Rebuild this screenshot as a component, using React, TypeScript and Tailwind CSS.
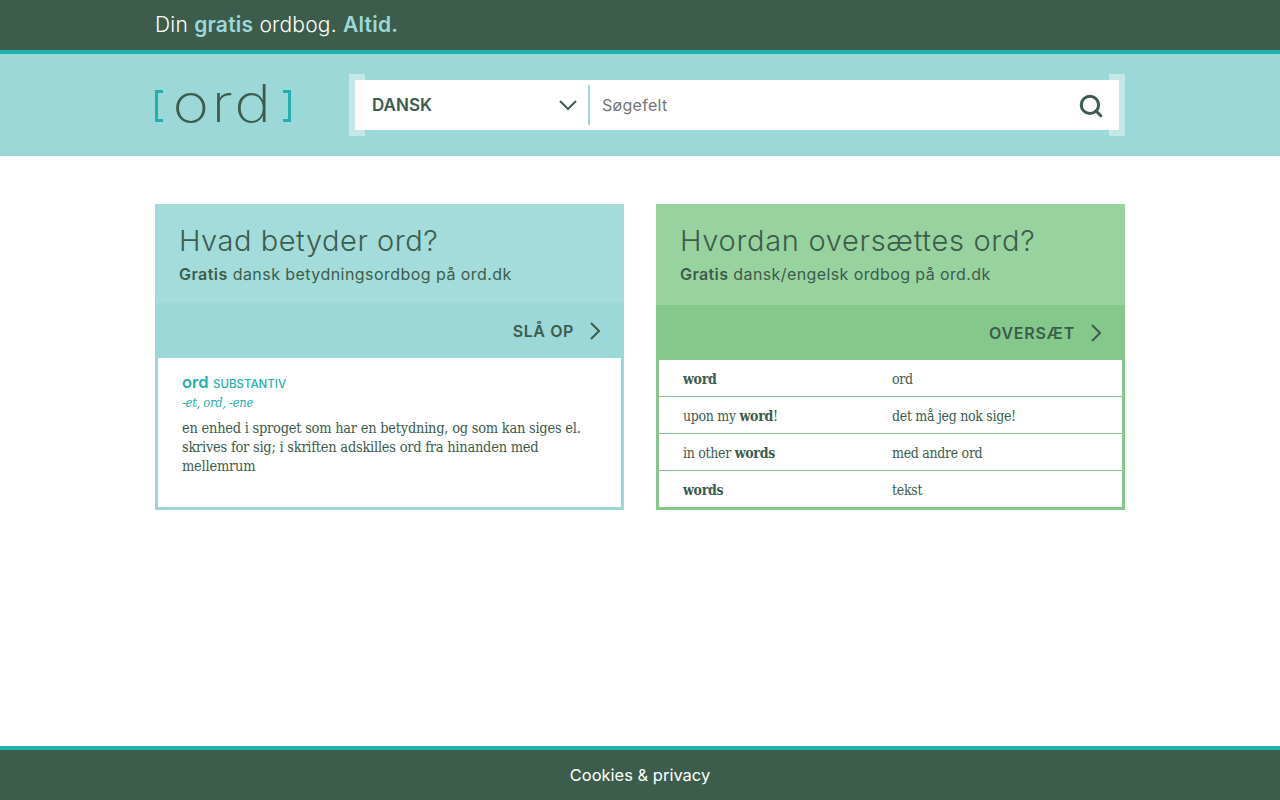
import { Search } from 'lucide-react';

const sans = 'font-["Inter",sans-serif]';
const serif = "font-['DejaVu_Serif_Condensed','DejaVu_Serif',serif]";

const rows = [
  { en: <b>word</b>, da: 'ord' },
  { en: <>upon my <b>word</b>!</>, da: 'det må jeg nok sige!' },
  { en: <>in other <b>words</b></>, da: 'med andre ord' },
  { en: <b>words</b>, da: 'tekst' },
];

const Arrow = () => (
  <svg width="10" height="18" viewBox="0 0 10 18" fill="none" stroke="#3c5c4c" strokeWidth="2">
    <path d="M1 1 L9 9 L1 17" />
  </svg>
);

export default function App() {
  return (
    <div className={`${sans} min-h-[800px] flex flex-col bg-white text-[#3c5c4c]`}>
      <div className="h-[54px] bg-[#3c5c4c] border-b-4 border-[#1eb1ad]">
        <div className="w-[970px] mx-auto h-[50px] flex items-center text-[21px] tracking-[0.22px] text-white font-light">
          <span>
            Din <b className="font-semibold text-[#9bd8d7]">gratis</b> ordbog. <b className="font-semibold text-[#9bd8d7]">Altid.</b>
          </span>
        </div>
      </div>

      <div className="h-[102px] bg-[#9bd8d7]">
        <div className="w-[970px] mx-auto h-full flex items-center justify-between">
          <div className="w-[136px] flex items-center justify-between">
            <div className="w-[8px] h-[32px] border-[3px] border-r-0 border-[#1eb1ad] mt-[2px]"></div>
            <div className="text-[52px] leading-[52px] font-extralight tracking-[2px] scale-x-[1.2] -mt-[3px]">ord</div>
            <div className="w-[8px] h-[32px] border-[3px] border-l-0 border-[#1eb1ad] mt-[2px]"></div>
          </div>

          <div className="relative w-[776px] h-[62px] p-[6px]">
            <div className="absolute left-0 top-0 w-4 h-full border-[6px] border-r-0 border-[#c3e8e7]"></div>
            <div className="absolute right-0 top-0 w-4 h-full border-[6px] border-l-0 border-[#c3e8e7]"></div>
            <div className="relative h-full bg-white flex items-center">
              <div className="w-[235px] h-10 border-r-2 border-[#9bd8d7] flex items-center justify-between pl-[17px] pr-[11px]">
                <span className="text-[17px] font-semibold pt-[1px]">DANSK</span>
                <svg width="18" height="11" viewBox="0 0 18 11" fill="none" stroke="#3c5c4c" strokeWidth="2">
                  <path d="M1 1 L9 9 L17 1" />
                </svg>
              </div>
              <div className="flex-1 pl-3 text-[16px] tracking-[0.3px] text-[#757575]">Søgefelt</div>
              <Search size={26} strokeWidth={2.8} className="mr-[15px] mt-[1px]" />
            </div>
          </div>
        </div>
      </div>

      <div className="w-[970px] mx-auto mt-12 grid grid-cols-2 gap-8">
        <div className="flex flex-col h-[306px]">
          <div className="h-[99px] bg-[#a3dcda] px-6 pt-[18px]">
            <h2 className="text-[29px] leading-[38px] font-light tracking-[0.55px]">Hvad betyder ord?</h2>
            <p className="text-[16px] leading-6 mt-[2px] tracking-[0.45px]"><b className="font-semibold">Gratis</b> dansk betydningsordbog på ord.dk</p>
          </div>
          <div className="h-[55px] bg-[#9bd8d7] flex items-center justify-end gap-4 pr-6">
            <span className="text-[16px] font-semibold tracking-[0.6px] pt-[1px]">SLÅ OP</span>
            <Arrow />
          </div>
          <div className="flex-1 bg-white border-[3px] border-t-0 border-[#9bd8d7] px-6 pt-[13px]">
            <div className="leading-[22px] text-[#1eb1ad]">
              <b className="text-[16.5px] font-semibold">ord</b> <span className="text-[11.5px] font-medium">SUBSTANTIV</span>
            </div>
            <div className={`${serif} italic text-[13px] leading-[19px] -mt-[2px] tracking-[-0.35px] text-[#1eb1ad]`}>-et, ord, -ene</div>
            <p className={`${serif} text-[14.5px] leading-[19px] mt-[7px] tracking-[-0.25px] text-[#3c5c4c]`}>
              en enhed i sproget som har en betydning, og som kan siges el. skrives for sig; i skriften adskilles ord fra hinanden med mellemrum
            </p>
          </div>
        </div>

        <div className="flex flex-col h-[306px]">
          <div className="h-[101px] bg-[#98d39f] px-6 pt-[18px]">
            <h2 className="text-[29px] leading-[38px] font-light tracking-[0.7px]">Hvordan oversættes ord?</h2>
            <p className="text-[16px] leading-6 mt-[2px] tracking-[0.4px]"><b className="font-semibold">Gratis</b> dansk/engelsk ordbog på ord.dk</p>
          </div>
          <div className="h-[55px] bg-[#84c98b] flex items-center justify-end gap-4 pr-6">
            <span className="text-[16px] font-semibold tracking-[0.8px] pt-[1px]">OVERSÆT</span>
            <Arrow />
          </div>
          <div className={`${serif} flex-1 bg-white border-[3px] border-t-0 border-[#84c98b] text-[14px] tracking-[-0.3px]`}>
            {rows.map((row, i) => (
              <div key={i} className="h-[37px] flex items-center pl-6 pt-[2px] border-b border-[#84c98b] last:border-b-0 last:h-[36px]">
                <div className="w-[209px]">{row.en}</div>
                <div>{row.da}</div>
              </div>
            ))}
          </div>
        </div>
      </div>

      <div className="mt-auto h-[54px] bg-[#3c5c4c] border-t-4 border-[#1eb1ad] flex items-center justify-center text-white text-[16.5px]">
        Cookies &amp; privacy
      </div>
    </div>
  );
}
